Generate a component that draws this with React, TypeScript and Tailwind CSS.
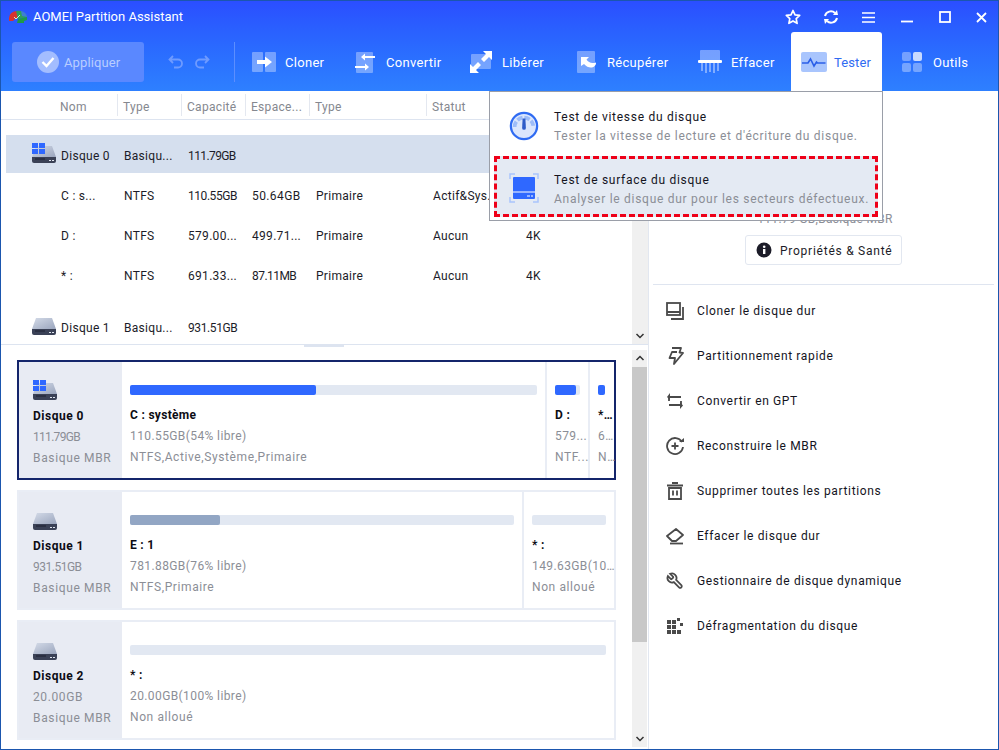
import React from "react";

const DiskIcon = ({ windows = false, id, className = "" }: { windows?: boolean; id: string; className?: string }) => (
  <svg width="24" height="20" viewBox="0 0 24 20" className={`shrink-0 ${className}`}>
    <defs>
      <linearGradient id={id} x1="0" y1="0" x2="1" y2="1">
        <stop offset="0" stopColor="#d4dbe8" />
        <stop offset="1" stopColor="#9aa5bd" />
      </linearGradient>
    </defs>
    <path d="M4 3h16l4 11H0z" fill={`url(#${id})`} />
    <path d="M0 14h24v4a2 2 0 0 1-2 2H2a2 2 0 0 1-2-2z" fill="#3a4156" />
    <rect x="3" y="15.5" width="10" height="1" fill="#1c2030" />
    <rect x="17" y="17" width="2" height="1" fill="#dfe5ef" />
    <rect x="20" y="17" width="2" height="1" fill="#dfe5ef" />
    {windows && (
      <g fill="#2f68ff">
        <rect x="0" y="0" width="6" height="5" />
        <rect x="7" y="0" width="6" height="5" />
        <rect x="0" y="6" width="6" height="5" />
        <rect x="7" y="6" width="6" height="5" />
      </g>
    )}
  </svg>
);

const Logo = () => (
  <svg width="20" height="16" viewBox="0 0 20 16">
    <path d="M1 9a8 7 0 0 1 8-7l1 7-3 1-2 2H1z" fill="#d8322e" />
    <path d="M8 2a9 8 0 0 1 11 6l-9 2z" fill="#2f9f5a" />
    <path d="M13 2a8 7 0 0 1 6 6l-5-1z" fill="#3d7fd0" />
    <path d="M10 10l9-2v3l-3 1v2H9z" fill="#1f9a48" />
    <path d="M6 8l2 2 4-4" fill="none" stroke="#c9f5d0" strokeWidth="1" />
  </svg>
);

const CloneTool = () => (
  <svg width="24" height="20" viewBox="0 0 24 20">
    <rect x="0" y="0" width="11" height="20" rx="1" fill="#fff" opacity=".35" />
    <rect x="13" y="0" width="11" height="20" rx="1" fill="#fff" opacity=".35" />
    <path d="M5 8h8V4.500l7 5.500-7 5.500V12H5z" fill="#fff" />
  </svg>
);

const ConvertTool = () => (
  <svg width="20" height="22" viewBox="0 0 20 22">
    <rect x="1" y="1" width="17" height="21" rx="1" fill="#fff" opacity=".35" />
    <path d="M20 5H10V2.500L6 6l4 3.500V7h10z" fill="#fff" />
    <path d="M0 15h10v-2.500L14 16l-4 3.500V17H0z" fill="#fff" />
  </svg>
);

const ReleaseTool = () => (
  <svg width="22" height="22" viewBox="0 0 22 22">
    <rect x="1" y="3" width="20" height="15" rx="1" fill="#fff" opacity=".35" />
    <path d="M13 0h9v9l-3-3-5 5-3-3 5-5zM9 22H0v-9l3 3 5-5 3 3-5 5z" fill="#fff" />
  </svg>
);

const RecoverTool = () => (
  <svg width="22" height="22" viewBox="0 0 22 22">
    <rect x="0" y="0" width="18" height="22" rx="1" fill="#fff" opacity=".35" />
    <path d="M4 6h8L9.500 8.500c2 3 5 4.500 9.500 3 .5 5-7 7.500-12 1.500L4 15z" fill="#fff" />
  </svg>
);

const EraseTool = () => (
  <svg width="24" height="23" viewBox="0 0 24 23">
    <rect x="2" y="0" width="20" height="11" rx="1" fill="#fff" opacity=".35" />
    <rect x="0" y="10" width="24" height="3" rx="1" fill="#fff" />
    <g fill="#fff" opacity=".4">
      <rect x="3" y="13" width="2" height="8" />
      <rect x="7" y="13" width="2" height="10" />
      <rect x="11" y="13" width="2" height="9" />
      <rect x="15" y="13" width="2" height="10" />
      <rect x="19" y="13" width="2" height="8" />
    </g>
  </svg>
);

const TestTool = () => (
  <svg width="26" height="20" viewBox="0 0 26 20">
    <rect width="26" height="20" rx="2" fill="#a9c5fd" />
    <path d="M1 11h6l2.500-4 3.500 7 2.500-4 1 1h8" fill="none" stroke="#2b5fe8" strokeWidth="1.600" />
  </svg>
);

const ToolsTool = () => (
  <svg width="20" height="20" viewBox="0 0 20 20" fill="#fff">
    <rect width="9" height="9" rx="2" opacity=".35" />
    <rect x="11" width="9" height="9" rx="2" opacity=".75" />
    <rect y="11" width="9" height="9" rx="2" opacity=".35" />
    <rect x="11" y="11" width="9" height="9" rx="2" opacity=".35" />
  </svg>
);

const toolbar = [
  { label: "Cloner", icon: <CloneTool />, box: "w-[120px] pl-[17px]", gap: "w-[33px]" },
  { label: "Convertir", icon: <ConvertTool />, box: "w-[115px] pl-[0px]", gap: "w-[31px]" },
  { label: "Libérer", icon: <ReleaseTool />, box: "w-[107px] pl-[0px]", gap: "w-[32px]" },
  { label: "Récupérer", icon: <RecoverTool />, box: "w-[121px] pl-[0px]", gap: "w-[30px]" },
  { label: "Effacer", icon: <EraseTool />, box: "w-[93px] pl-[0px]", gap: "w-[33px]" },
];

const WindowButtons = () => (
  <div className="ml-auto flex items-center h-full pt-[1px]">
    <svg width="16" height="16" viewBox="0 0 16 16" className="mr-[22px]">
      <path d="M8 1.500l2 4.300 4.700.6-3.500 3.200.9 4.700L8 11.900 3.900 14.300l.9-4.700L1.300 6.400 6 5.800z" fill="none" stroke="#fff" strokeWidth="1.700" strokeLinejoin="round" />
    </svg>
    <svg width="16" height="16" viewBox="0 0 16 16" className="mr-[23px]">
      <path d="M2 7a6 6 0 0 1 10-3M14 9a6 6 0 0 1-10 3" fill="none" stroke="#fff" strokeWidth="2" />
      <path d="M10 6l5 0-1-5zM6 10H1l1 5z" fill="#fff" />
    </svg>
    <svg width="13" height="11" viewBox="0 0 13 11" className="mr-[26px]">
      <path d="M0 1h13M0 5.500h13M0 10h13" stroke="#fff" strokeWidth="1.600" />
    </svg>
    <svg width="12" height="12" viewBox="0 0 12 12" className="mr-[26px]">
      <path d="M0 10.500h12" stroke="#fff" strokeWidth="1.800" />
    </svg>
    <svg width="12" height="12" viewBox="0 0 12 12" className="mr-[25px]">
      <rect x="1" y="1" width="10" height="10" fill="none" stroke="#fff" strokeWidth="1.800" />
    </svg>
    <svg width="11" height="11" viewBox="0 0 11 11" className="mr-[11px]">
      <path d="M1 1l9 9M10 1l-9 9" stroke="#fff" strokeWidth="1.800" />
    </svg>
  </div>
);

const Header = () => (
  <div className="h-[90px] shrink-0 bg-gradient-to-b from-[#2b4eff] to-[#2e80ff] text-white">
    <div className="h-[31px] flex items-center pl-[7px]">
      <Logo />
      <span className="ml-[5px] text-[13px] tracking-normal">AOMEI Partition Assistant</span>
      <WindowButtons />
    </div>
    <div className="h-[59px] flex items-start text-[13px] tracking-[0.3px]">
      <div className="ml-[11px] mt-[10px] w-[132px] h-[40px] rounded-[3px] bg-[#5a88ff] flex items-center pl-[25px] text-[#b9cdff]">
        <svg width="22" height="22" viewBox="0 0 22 22">
          <circle cx="11" cy="11" r="11" fill="#a3bdff" />
          <path d="M5.500 11l4 4 7-8" fill="none" stroke="#fff" strokeWidth="2.400" />
        </svg>
        <span className="ml-[5px] pt-[1px] tracking-[0.1px]">Appliquer</span>
      </div>
      <div className="mt-[10px] h-[40px] flex items-center text-[#6f9bff]">
        <svg width="16" height="14" viewBox="0 0 16 14" className="ml-[24px]">
          <path d="M5 1L1.500 4.500 5 8M2 4.500h8a3.700 3.700 0 0 1 0 8H6" fill="none" stroke="currentColor" strokeWidth="1.800" />
        </svg>
        <svg width="16" height="14" viewBox="0 0 16 14" className="ml-[10px]">
          <path d="M11 1l3.500 3.500L11 8M14 4.500H6a3.700 3.700 0 0 0 0 8h4" fill="none" stroke="currentColor" strokeWidth="1.800" />
        </svg>
        <div className="ml-[24px] w-[1px] h-[40px] bg-[#5c8eff]" />
      </div>
      {toolbar.map((t) => (
        <div key={t.label} className={`${t.box} h-[59px] flex items-center`}>
          <div className={`${t.gap} shrink-0 flex items-center`}>{t.icon}</div>
          <span className="pt-[2px]">{t.label}</span>
        </div>
      ))}
      <div className="w-[91px] h-[59px] bg-white rounded-t-[3px] flex items-center pl-[10px] text-[#2f6bf2]">
        <TestTool />
        <span className="ml-[7px] pt-[2px] tracking-[0.1px]">Tester</span>
      </div>
      <div className="h-[59px] flex items-center ml-[20px]">
        <ToolsTool />
        <span className="ml-[11px] pt-[2px]">Outils</span>
      </div>
    </div>
  </div>
);

const rows = [
  { name: "C : s...", type: "NTFS", cap: "110.55GB", capTrack: "tracking-[-0.45px]", free: "50.64GB", freeTrack: "tracking-[0.4px]", kind: "Primaire", status: "Actif&Sys...", tail: "4K" },
  { name: "D :", type: "NTFS", cap: "579.00...", capTrack: "tracking-[0.3px]", free: "499.71...", freeTrack: "tracking-[0.3px]", kind: "Primaire", status: "Aucun", tail: "4K" },
  { name: "* :", type: "NTFS", cap: "691.33...", capTrack: "tracking-[0.3px]", free: "87.11MB", freeTrack: "tracking-[-0.55px]", kind: "Primaire", status: "Aucun", tail: "4K" },
];

const gridCols = "grid grid-cols-[112px_64px_64px_64px_117px_94px_1fr] items-center";

const DiskTable = () => (
  <div className="w-[631px] h-[253px] overflow-hidden">
    <div className="h-[29px] border-b border-[#dde4f0] text-[#85888f]">
      <div className={`${gridCols} ml-[5px] h-[28px]`}>
        <div className="h-[22px] border-r border-[#e4e8f0] pl-[54px] leading-[27px]">Nom</div>
        <div className="h-[22px] border-r border-[#e4e8f0] pl-[5px] leading-[27px]">Type</div>
        <div className="h-[22px] border-r border-[#e4e8f0] pl-[5px] leading-[27px]">Capacité</div>
        <div className="h-[22px] border-r border-[#e4e8f0] pl-[5px] leading-[27px] whitespace-nowrap">Espace...</div>
        <div className="h-[22px] border-r border-[#e4e8f0] pl-[5px] leading-[27px]">Type</div>
        <div className="h-[22px] pl-[5px] leading-[27px]">Statut</div>
      </div>
    </div>
    <div className={`${gridCols} ml-[5px] mt-[15px] h-[38px] bg-[#d5dfee]`}>
      <div className="flex items-center pl-[26px] gap-[5px] whitespace-nowrap">
        <DiskIcon windows id="t0" className="mb-[2px]" />
        <span className="mt-[4px]">Disque 0</span>
      </div>
      <div className="pl-[6px] pt-[4px] whitespace-nowrap">Basiqu...</div>
      <div className="pl-[6px] pt-[4px] tracking-[-0.6px]">111.79GB</div>
    </div>
    <div className="mt-[2px]">
      {rows.map((r) => (
        <div key={r.name} className={`${gridCols} ml-[5px] h-[40px] whitespace-nowrap`}>
          <div className="pl-[55px] pt-[2px]">{r.name}</div>
          <div className="pl-[6px] pt-[2px]">{r.type}</div>
          <div className={`pl-[6px] pt-[2px] ${r.capTrack}`}>{r.cap}</div>
          <div className={`pl-[6px] pt-[2px] ${r.freeTrack}`}>{r.free}</div>
          <div className="pl-[6px] pt-[2px]">{r.kind}</div>
          <div className="pl-[6px] pt-[2px]">{r.status}</div>
          <div className="pl-[5px] pt-[2px]">{r.tail}</div>
        </div>
      ))}
    </div>
    <div className={`${gridCols} ml-[5px] mt-[11px] h-[40px]`}>
      <div className="flex items-center pl-[26px] gap-[5px] whitespace-nowrap">
        <DiskIcon id="t1" className="mb-[2px]" />
        <span className="mt-[4px]">Disque 1</span>
      </div>
      <div className="pl-[6px] pt-[4px] whitespace-nowrap">Basiqu...</div>
      <div className="pl-[6px] pt-[4px] tracking-[-0.4px]">931.51GB</div>
    </div>
  </div>
);

const Chevron = ({ up = false }: { up?: boolean }) => (
  <svg width="16" height="16" viewBox="0 0 16 16">
    <path d={up ? "M4.500 10L8 6.500 11.500 10" : "M4.500 6L8 9.500 11.500 6"} fill="none" stroke="#333" strokeWidth="1.500" />
  </svg>
);

const Partition = ({ box, bar, used, usedColor, title, size, info }: {
  box: string; bar: string; used?: string; usedColor?: string; title: string; size: string; info: string;
}) => (
  <div className={`${box} shrink-0 pl-[8px] pt-[23px] whitespace-nowrap`}>
    <div className={`${bar} h-[10px] rounded-[2px] bg-[#e2e8f2]`}>
      {used && <div className={`${used} ${usedColor} h-[10px] rounded-[2px]`} />}
    </div>
    <div className="mt-[10px] h-[21px] leading-[21px] font-bold text-[#0c0c14]">{title}</div>
    <div className="h-[21px] leading-[21px] text-[#8b8e96] tracking-[0.4px]">{size}</div>
    <div className="h-[21px] leading-[21px] text-[#8b8e96] tracking-[0.6px]">{info}</div>
  </div>
);

const Card = ({ name, size, sizeTrack, windows, selected, id, children }: {
  name: string; size: string; sizeTrack: string; windows?: boolean; selected?: boolean; id: string; children: React.ReactNode;
}) => (
  <div className={`w-[599px] h-[120px] border-2 flex ${selected ? "border-[#14256b]" : "border-[#e9edf5]"}`}>
    <div className="w-[103px] shrink-0 bg-[#e8ebf3] pl-[14px] pt-[18px] whitespace-nowrap">
      <DiskIcon windows={windows} id={id} />
      <div className="mt-[6px] h-[21px] leading-[21px] font-bold text-[#0c0c14] tracking-[0.5px]">{name}</div>
      <div className={`h-[21px] leading-[21px] text-[#8b8e96] ${sizeTrack}`}>{size}</div>
      <div className="h-[21px] leading-[21px] text-[#8b8e96] tracking-[0.65px]">Basique MBR</div>
    </div>
    {children}
  </div>
);

const DiskCards = () => (
  <div className="w-[631px] pl-[16px] pt-[12px] flex flex-col gap-[10px]">
    <Card name="Disque 0" size="111.79GB" sizeTrack="tracking-[-0.7px]" windows selected id="c0">
      <Partition box="w-[425px] border-r-2 border-[#e9edf5]" bar="w-[407px]" used="w-[186px]" usedColor="bg-[#2f68ff]"
        title="C : système" size="110.55GB(54% libre)" info="NTFS,Active,Système,Primaire" />
      <Partition box="w-[43px] border-r-2 border-[#e9edf5]" bar="w-[25px]" used="w-[21px]" usedColor="bg-[#2f68ff]"
        title="D :" size="579..." info="NTF..." />
      <Partition box="w-[24px]" bar="w-[7px]" used="w-[7px]" usedColor="bg-[#2f68ff]"
        title="*…" size="6…" info="N…" />
    </Card>
    <Card name="Disque 1" size="931.51GB" sizeTrack="tracking-[-0.5px]" id="c1">
      <Partition box="w-[402px] border-r-2 border-[#e9edf5]" bar="w-[384px]" used="w-[90px]" usedColor="bg-[#92a6c4]"
        title="E : 1" size="781.88GB(76% libre)" info="NTFS,Primaire" />
      <Partition box="w-[90px]" bar="w-[74px]" title="* :" size="149.63GB(10…" info="Non alloué" />
    </Card>
    <Card name="Disque 2" size="20.00GB" sizeTrack="tracking-[0.6px]" id="c2">
      <Partition box="w-[492px]" bar="w-[476px]" title="* :" size="20.00GB(100% libre)" info="Non alloué" />
    </Card>
  </div>
);

const icon = { fill: "none", stroke: "#4a4a4a", strokeWidth: 1.8 };

const actions = [
  { label: "Cloner le disque dur", svg: <><rect x="1" y="1" width="13" height="12" {...icon} /><path d="M1 10h13M17 5v12H5" {...icon} /></> },
  { label: "Partitionnement rapide", svg: <path d="M6 1h9l-1.500 4.500L17 6l-9 11 1-6H3.500L6 5h5" {...icon} strokeLinejoin="round" /> },
  { label: "Convertir en GPT", svg: <><path d="M3 9V5h12" {...icon} /><path d="M15 9v4H3" {...icon} /><path d="M4 1v7L1 5zM14 10v7l3-3.500z" fill="#4a4a4a" /></> },
  { label: "Reconstruire le MBR", svg: <><path d="M16 5A8 8 0 1 0 17 10" {...icon} /><path d="M9 5.500v7M5.500 9h7" {...icon} /><path d="M13 5h5V1z" fill="#4a4a4a" /></> },
  { label: "Supprimer toutes les partitions", svg: <><path d="M6 1h6M1 3.500h16" stroke="#4a4a4a" strokeWidth="1.800" /><path d="M3 6h12v11H3zM7 8.500v5M11 8.500v5" {...icon} /></> },
  { label: "Effacer le disque dur", svg: <><path d="M10 2l7 6-7 6H6L1 9z" {...icon} strokeLinejoin="round" /><path d="M4 16.500h13" {...icon} /></> },
  { label: "Gestionnaire de disque dynamique", svg: (
    <g transform="translate(18,0) scale(-.75,.75)">
      <path d="M14.700 6.300a1 1 0 0 0 0 1.400l1.600 1.600a1 1 0 0 0 1.400 0l3.770-3.770a6 6 0 0 1-7.940 7.940l-6.910 6.910a2.120 2.120 0 0 1-3-3l6.910-6.910a6 6 0 0 1 7.940-7.940l-3.760 3.760z" fill="none" stroke="#4a4a4a" strokeWidth="2.400" />
    </g>
  ) },
  { label: "Défragmentation du disque", svg: (
    <g fill="#4a4a4a">
      <rect x="1" y="3" width="4" height="4" /><rect x="6" y="3" width="4" height="4" />
      <rect x="11" y="1" width="3" height="3" /><rect x="14" y="6" width="3" height="3" />
      <rect x="1" y="8" width="4" height="4" /><rect x="6" y="8" width="4" height="4" />
      <rect x="1" y="13" width="4" height="4" /><rect x="6" y="13" width="4" height="4" /><rect x="11" y="13" width="4" height="4" />
    </g>
  ) },
];

const RightPanel = () => (
  <div className="flex-1 flex flex-col tracking-[0.65px]">
    <div className="mt-[118px] h-[20px] leading-[20px] text-center text-[#8b8e96] pl-[3px] tracking-[0.3px]">111.79 GB,Basique MBR</div>
    <button className="mt-[6px] self-start ml-[96px] w-[157px] h-[30px] border border-[#e2e7f0] rounded-[3px] flex items-center pl-[10px]">
      <svg width="16" height="16" viewBox="0 0 16 16">
        <circle cx="8" cy="8" r="7.500" fill="#1c1c28" />
        <rect x="7" y="7" width="2.400" height="5" fill="#fff" />
        <circle cx="8.200" cy="4.700" r="1.300" fill="#fff" />
      </svg>
      <span className="ml-[8px] pt-[1px] text-[#1c1c28] tracking-[0.75px]">Propriétés &amp; Santé</span>
    </button>
    <div className="mt-[19px] ml-[4px] w-[341px] h-[1px] bg-[#dfe5f0]" />
    <div className="mt-[3px]">
      {actions.map((a) => (
        <div key={a.label} className="h-[45px] flex items-center pl-[17px]">
          <svg width="18" height="18" viewBox="0 0 18 18" className="shrink-0">{a.svg}</svg>
          <span className="ml-[13px] pt-[1px] text-[#14141e] whitespace-nowrap">{a.label}</span>
        </div>
      ))}
    </div>
  </div>
);

const TestMenu = () => (
  <div className="absolute left-[488px] top-[90px] w-[394px] h-[130px] bg-white border border-[#9a9ea8] z-10 tracking-[0.72px]">
    <div className="h-[64px] flex items-center pl-[19px] pt-[3px]">
      <svg width="30" height="30" viewBox="0 0 32 32" className="shrink-0">
        <circle cx="16" cy="16" r="14" fill="#dbe6fd" stroke="#2f6bf2" strokeWidth="2.400" />
        <path d="M6 17a10 10 0 0 1 20 0" fill="none" stroke="#9dbcf8" strokeWidth="4" strokeDasharray="6 2" />
        <path d="M14.500 8h3l.5 10a2 2 0 0 1-4 0z" fill="#2f5cc8" />
      </svg>
      <div className="ml-[15px] mt-[2px] whitespace-nowrap">
        <div className="h-[19px] leading-[19px] text-[#14141e]">Test de vitesse du disque</div>
        <div className="h-[19px] leading-[19px] text-[#8b8e96]">Tester la vitesse de lecture et d'écriture du disque.</div>
      </div>
    </div>
    <div className="ml-[4px] w-[384px] h-[61px] bg-[#e4eaf3] border-[3px] border-dashed border-[#ee0018] flex items-center pl-[12px] pt-[3px]">
      <svg width="30" height="30" viewBox="0 0 30 30" className="shrink-0">
        <path d="M1 6V1h5M24 1h5v5M1 24v5h5M29 24v5h-5" fill="none" stroke="#a9c5fd" strokeWidth="1.500" />
        <rect x="4" y="4" width="22" height="22" rx="1" fill="#2f68ff" />
        <path d="M4 19h22M18 23h3M22 23h2" stroke="#fff" strokeWidth="1" />
      </svg>
      <div className="ml-[15px] mt-[3px] whitespace-nowrap">
        <div className="h-[19px] leading-[19px] text-[#14141e]">Test de surface du disque</div>
        <div className="h-[19px] leading-[19px] text-[#8b8e96]">Analyser le disque dur pour les secteurs défectueux.</div>
      </div>
    </div>
  </div>
);

export default function App() {
  return (
    <div className="relative w-[999px] h-[750px] overflow-hidden bg-white border border-[#1b56ae] flex flex-col font-['Roboto',sans-serif] text-[12px] tracking-[0.3px] text-[#1c1c28]">
      <Header />
      <div className="flex-1 flex min-h-0">
        <div className="w-[648px] shrink-0 flex flex-col border-r border-[#e2e7f0]">
          <div className="h-[254px] shrink-0 flex border-b border-[#dde4f0]">
            <DiskTable />
            <div className="w-[16px] bg-[#f0f0f0] flex flex-col justify-end">
              <Chevron />
            </div>
          </div>
          <div className="h-[3px] shrink-0">
            <div className="ml-[303px] w-[40px] h-[2px] bg-[#dde4f0]" />
          </div>
          <div className="flex-1 flex min-h-0">
            <DiskCards />
            <div className="w-[15px] mt-[2px] mb-[2px] bg-[#f0f0f0] flex flex-col">
              <Chevron up />
              <div className="h-[275px] bg-[#c8c8c8] mt-[1px]" />
              <div className="mt-auto"><Chevron /></div>
            </div>
          </div>
        </div>
        <RightPanel />
      </div>
      <TestMenu />
    </div>
  );
}
